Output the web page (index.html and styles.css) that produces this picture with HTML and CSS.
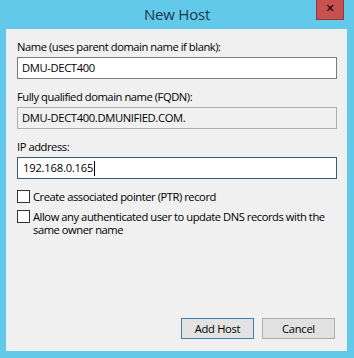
FILE: index.html
```html
<!DOCTYPE html>
<html>
<head>
<meta charset="utf-8">
<link rel="stylesheet" href="styles.css">
</head>
<body>
<div class="window">
  <div class="titlebar">
    <span></span>
    <span class="title">New Host</span>
    <span class="close">&#x2715;</span>
  </div>
  <div class="client">
    <div class="field">
      <div class="label">Name (uses parent domain name if blank):</div>
      <div class="input">DMU-DECT400</div>
    </div>
    <div class="field">
      <div class="label">Fully qualified domain name (FQDN):</div>
      <div class="input readonly">DMU-DECT400.DMUNIFIED.COM.</div>
    </div>
    <div class="field last">
      <div class="label">IP address:</div>
      <div class="input focused"><span class="ip">192.168.0.165</span><span class="caret"></span></div>
    </div>
    <div class="check">
      <span class="box"></span>
      <span class="ctext">Create associated pointer (PTR) record</span>
    </div>
    <div class="check">
      <span class="box"></span>
      <span class="ctext">Allow any authenticated user to update DNS records with the same owner name</span>
    </div>
    <div class="buttons">
      <div class="btn default">Add Host</div>
      <div class="btn">Cancel</div>
    </div>
  </div>
</div>
</body>
</html>
```
FILE: styles.css
```css
html, body {
  margin: 0;
  padding: 0;
}
body {
  width: 354px;
  height: 358px;
  background: #63c9eb;
  font-family: "Open Sans", "Noto Sans", sans-serif;
  font-size: 11.2px;
  color: #000;
  overflow: hidden;
}
.window {
  display: flex;
  flex-direction: column;
  height: 358px;
}
.titlebar {
  height: 29px;
  display: grid;
  grid-template-columns: 1fr auto 1fr;
  align-items: start;
}
.title {
  font-size: 15px;
  color: #1b3647;
  line-height: 20px;
  padding-top: 4px;
  letter-spacing: -0.2px;
}
.close {
  justify-self: end;
  margin-right: 10px;
  width: 28px;
  height: 20px;
  background: #c75050;
  border: 1px solid #8e3b3b;
  border-top: none;
  box-sizing: border-box;
  color: #000;
  font-size: 11px;
  font-weight: bold;
  line-height: 18px;
  text-align: center;
  font-family: "DejaVu Sans", sans-serif;
}
.client {
  margin: 0 7px 7px 6px;
  flex: 1;
  background: #f0f0f0;
  padding: 10px 10px 0 11px;
  display: flex;
  flex-direction: column;
}
.field {
  margin-bottom: 10px;
}
.field.last {
  margin-bottom: 11px;
}
.label {
  line-height: 16px;
  letter-spacing: -0.45px;
  margin-bottom: 2px;
}
.input {
  width: 320px;
  height: 22px;
  box-sizing: border-box;
  border: 1px solid #7a7a7a;
  background: #fff;
  padding: 0 4px;
  line-height: 20px;
  letter-spacing: -0.35px;
  display: flex;
  align-items: center;
}
.input.readonly {
  background: #f0f0f0;
  border-color: #adadad;
}
.input.focused {
  border-color: #3c5a74;
}
.ip {
  letter-spacing: -0.2px;
  padding-left: 1px;
}
.caret {
  display: inline-block;
  width: 1px;
  height: 15px;
  background: #000;
  margin-left: 1px;
}
.check {
  display: flex;
  align-items: flex-start;
  margin-bottom: 7px;
}
.box {
  flex: none;
  width: 13px;
  height: 13px;
  box-sizing: border-box;
  border: 1px solid #333;
  background: #fff;
  margin-right: 3px;
}
.ctext {
  line-height: 13px;
  letter-spacing: -0.45px;
  width: 305px;
}
.buttons {
  margin-top: auto;
  margin-bottom: 12px;
  display: flex;
  justify-content: flex-end;
  gap: 8px;
  padding-right: 2px;
}
.btn {
  width: 73px;
  height: 21px;
  box-sizing: border-box;
  border: 1px solid #acacac;
  background: #e1e1e1;
  text-align: center;
  line-height: 19px;
  letter-spacing: -0.3px;
}
.btn.default {
  border-color: #3c7fb1;
  background: #e3e3e3;
}
```
